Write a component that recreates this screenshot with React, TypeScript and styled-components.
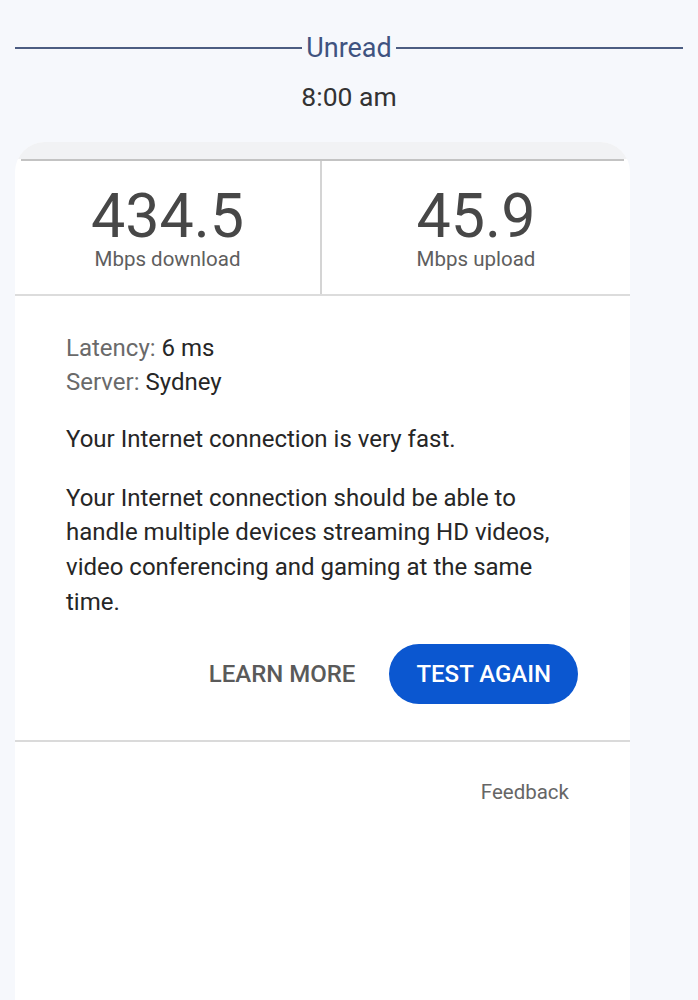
import React from "react";
import styled, { createGlobalStyle } from "styled-components";

const GlobalStyle = createGlobalStyle`
  html, body {
    margin: 0;
    padding: 0;
    background: #f6f8fc;
    font-family: Roboto, "Noto Sans", Arial, sans-serif;
  }
  * { box-sizing: border-box; }
`;

const Page = styled.div`
  width: 698px;
  height: 1000px;
  overflow: hidden;
  background: #f6f8fc;
  display: flex;
  flex-direction: column;
`;

const UnreadRow = styled.div`
  display: flex;
  align-items: center;
  gap: 4px;
  padding: 31px 15px 0;
  height: 64px;
`;

const Rule = styled.div`
  flex: 1;
  height: 2px;
  background: #4c5d82;
`;

const UnreadLabel = styled.span`
  font-size: 27px;
  line-height: 34px;
  color: #3f5380;
`;

const Time = styled.div`
  text-align: center;
  font-size: 26.5px;
  line-height: 34px;
  color: #333;
  margin-top: 16px;
`;

const Bubble = styled.div`
  margin: 28px 0 0 15px;
  width: 615px;
  flex: 1;
  background: #ffffff;
  border-radius: 30px 30px 0 0;
  overflow: hidden;
  display: flex;
  flex-direction: column;
`;

const BubbleTop = styled.div`
  height: 17px;
  background: #f1f2f4;
`;

const TopLine = styled.div`
  height: 2px;
  margin: 0 6px;
  background: #c3c3c3;
`;

const Stats = styled.div`
  display: grid;
  grid-template-columns: 307px 1fr;
  border-bottom: 2px solid #dcdcdc;
`;

const StatCell = styled.div<{ $divider?: boolean }>`
  height: 133px;
  display: flex;
  flex-direction: column;
  align-items: center;
  justify-content: center;
  padding-top: 2px;
  border-right: ${(p) => (p.$divider ? "2px solid #d4d4d4" : "none")};
`;

const StatValue = styled.div`
  font-size: 61px;
  line-height: 60px;
  color: #474747;
`;

const StatLabel = styled.div`
  font-size: 20.5px;
  line-height: 26px;
  color: #5e5e5e;
`;

const Body = styled.div`
  padding: 35px 52px 0 51px;
  display: flex;
  flex-direction: column;
`;

const InfoLine = styled.div`
  font-size: 24px;
  line-height: 34px;
  color: #262626;
`;

const InfoKey = styled.span`
  color: #6a6a6a;
`;

const Para = styled.p<{ $gap: number }>`
  margin: ${(p) => p.$gap}px 0 0;
  font-size: 24px;
  line-height: 34.7px;
  color: #262626;
`;

const Actions = styled.div`
  display: flex;
  justify-content: flex-end;
  align-items: center;
  gap: 34px;
  margin-top: 24px;
  padding-bottom: 36px;
`;

const TextButton = styled.button`
  border: none;
  background: none;
  padding: 0;
  font-family: inherit;
  font-size: 24px;
  font-weight: 500;
  color: #5a5a5a;
`;

const PrimaryButton = styled.button`
  border: none;
  height: 60px;
  padding: 0 27px;
  border-radius: 30px;
  background: #0b57d0;
  color: #ffffff;
  font-family: inherit;
  font-size: 24px;
  font-weight: 500;
`;

const Footer = styled.div`
  border-top: 2px solid #dadada;
  display: flex;
  justify-content: flex-end;
  padding: 36px 61px 0 0;
`;

const FeedbackLink = styled.span`
  font-size: 20.5px;
  line-height: 28px;
  color: #666666;
`;

export default function App() {
  return (
    <Page>
      <GlobalStyle />
      <UnreadRow>
        <Rule />
        <UnreadLabel>Unread</UnreadLabel>
        <Rule />
      </UnreadRow>
      <Time>8:00 am</Time>
      <Bubble>
        <BubbleTop />
        <TopLine />
        <Stats>
          <StatCell $divider>
            <StatValue>434.5</StatValue>
            <StatLabel>Mbps download</StatLabel>
          </StatCell>
          <StatCell>
            <StatValue>45.9</StatValue>
            <StatLabel>Mbps upload</StatLabel>
          </StatCell>
        </Stats>
        <Body>
          <InfoLine>
            <InfoKey>Latency:</InfoKey> 6 ms
          </InfoLine>
          <InfoLine>
            <InfoKey>Server:</InfoKey> Sydney
          </InfoLine>
          <Para $gap={23}>Your Internet connection is very fast.</Para>
          <Para $gap={24}>
            Your Internet connection should be able to handle multiple devices
            streaming HD videos, video conferencing and gaming at the same time.
          </Para>
          <Actions>
            <TextButton>LEARN MORE</TextButton>
            <PrimaryButton>TEST AGAIN</PrimaryButton>
          </Actions>
        </Body>
        <Footer>
          <FeedbackLink>Feedback</FeedbackLink>
        </Footer>
      </Bubble>
    </Page>
  );
}
